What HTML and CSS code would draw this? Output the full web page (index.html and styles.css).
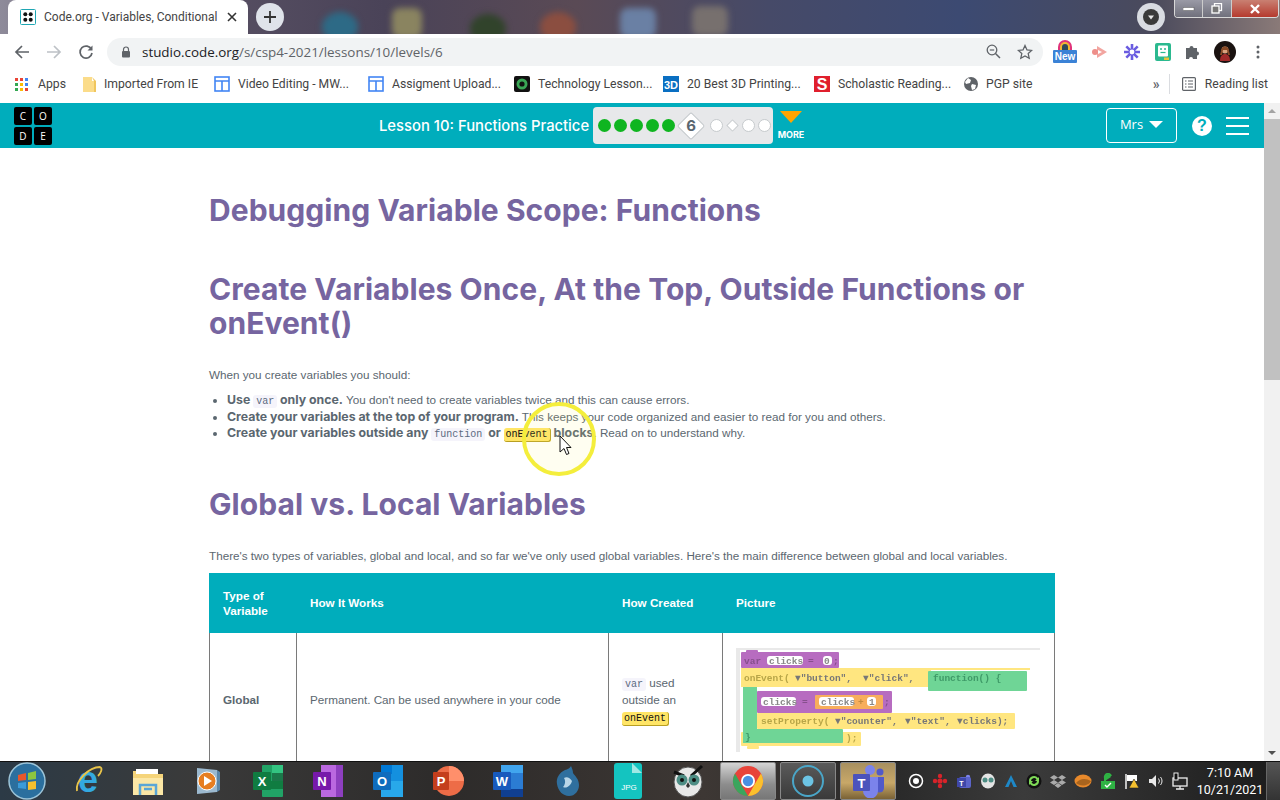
FILE: index.html
```html
<!DOCTYPE html>
<html lang="en">
<head>
<meta charset="utf-8">
<title>Code.org - Variables, Conditionals</title>
<link rel="stylesheet" href="styles.css">
</head>
<body>
<div class="window">
  <div class="titlebar">
    <div class="wall-blobs"><i class="blob b1"></i><i class="blob b2"></i><i class="blob b3"></i><i class="blob b4"></i><i class="blob b5"></i><i class="blob b6"></i></div>
    <div class="tab">
      <svg class="fav" width="16" height="16" viewBox="0 0 16 16"><rect x=".5" y=".5" width="15" height="15" rx="1" fill="#fff" stroke="#1fa6b3"/><g fill="#111"><circle cx="5.3" cy="5.3" r="2"/><circle cx="10.7" cy="5.3" r="2"/><circle cx="5.3" cy="10.7" r="2"/><circle cx="10.7" cy="10.7" r="2"/></g></svg>
      <span class="tab-title">Code.org - Variables, Conditional</span>
      <svg class="tab-x" width="10" height="10" viewBox="0 0 10 10"><path d="M1 1l8 8M9 1l-8 8" stroke="#333" stroke-width="1.6"/></svg>
    </div>
    <div class="newtab"><svg width="12" height="12" viewBox="0 0 12 12"><path d="M6 0v12M0 6h12" stroke="#333" stroke-width="1.8"/></svg></div>
    <div class="spacer"></div>
    <div class="profile-dot"><svg width="18" height="18" viewBox="0 0 18 18"><circle cx="9" cy="9" r="8" fill="#3a3a3a"/><path d="M6 7.5h6L9 11.5z" fill="#e8e8e8"/></svg></div>
    <div class="winctl">
      <span class="wbtn"><svg width="12" height="6" viewBox="0 0 12 6"><rect y="1.500" width="11" height="3" fill="#fff" stroke="#555" stroke-width=".5"/></svg></span>
      <span class="wbtn"><svg width="12" height="11" viewBox="0 0 12 11"><rect x="3.500" y=".5" width="7" height="7" fill="none" stroke="#fff" stroke-width="1.300"/><rect x="1" y="3" width="7" height="7" fill="#777" stroke="#fff" stroke-width="1.300"/></svg></span>
      <span class="wbtn close"><svg width="12" height="10" viewBox="0 0 12 10"><path d="M2 1l8 8M10 1l-8 8" stroke="#fff" stroke-width="2.400"/></svg></span>
    </div>
  </div>

  <div class="toolbar">
    <svg class="nav" width="16" height="16" viewBox="0 0 16 16"><path d="M15 8H2M8 2L2 8l6 6" fill="none" stroke="#5f6368" stroke-width="1.700"/></svg>
    <svg class="nav" width="16" height="16" viewBox="0 0 16 16"><path d="M1 8h13M8 2l6 6-6 6" fill="none" stroke="#bdc1c6" stroke-width="1.700"/></svg>
    <svg class="nav" width="16" height="16" viewBox="0 0 16 16"><path d="M13.500 5.500A6 6 0 1 0 14 9" fill="none" stroke="#5f6368" stroke-width="1.700"/><path d="M14.500 1.500v5h-5z" fill="#5f6368"/></svg>
    <div class="omnibox">
      <svg class="lock" width="10" height="12" viewBox="0 0 10 12"><path d="M2.500 5V3.500a2.500 2.500 0 0 1 5 0V5" fill="none" stroke="#5f6368" stroke-width="1.200"/><rect x="1" y="5" width="8" height="6.500" rx="1" fill="#5f6368"/></svg>
      <span class="url"><b>studio.code.org</b>/s/csp4-2021/lessons/10/levels/6</span>
      <span class="spacer"></span>
      <svg width="15" height="15" viewBox="0 0 15 15"><circle cx="6" cy="6" r="4.800" fill="none" stroke="#5f6368" stroke-width="1.300"/><path d="M9.500 9.500L14 14" stroke="#5f6368" stroke-width="1.500"/><path d="M3.800 6h4.400" stroke="#5f6368" stroke-width="1.200"/></svg>
      <svg class="star" width="16" height="16" viewBox="0 0 16 16"><path d="M8 1.500l2 4.400 4.700.5-3.500 3.200 1 4.700L8 11.900l-4.200 2.400 1-4.700L1.300 6.400l4.700-.5z" fill="none" stroke="#5f6368" stroke-width="1.300"/></svg>
    </div>
    <div class="exts">
      <span class="ext-new"><svg width="22" height="14" viewBox="0 0 22 14"><path d="M4 14V9a7 7 0 0 1 14 0v5z" fill="#e0337a"/><path d="M6 14V9a5 5 0 0 1 10 0v5z" fill="#f2b632"/><path d="M8 14V9a3 3 0 0 1 6 0v5z" fill="#2e4a5a"/></svg><em class="new-tag">New</em></span>
      <svg width="18" height="16" viewBox="0 0 18 16"><path d="M6 2l10 6-10 6z" fill="#f2a5a0"/><circle cx="4" cy="8" r="3" fill="#ee8f8a"/><path d="M7 6l4 2-4 2z" fill="#fff"/></svg>
      <svg width="18" height="18" viewBox="0 0 18 18"><g stroke="#6a5ce0" stroke-width="2.600"><path d="M9 1v16M1 9h16M3.300 3.300l11.400 11.400M14.700 3.300L3.300 14.700"/></g><circle cx="9" cy="9" r="2.400" fill="#fff"/></svg>
      <svg width="16" height="18" viewBox="0 0 16 18"><rect width="16" height="18" rx="2" fill="#2bb98f"/><rect x="3" y="2.500" width="10" height="11" rx="1" fill="#fff"/><circle cx="6" cy="6" r="1" fill="#2bb98f"/><circle cx="10" cy="6" r="1" fill="#2bb98f"/><path d="M5.500 9.500h5" stroke="#2bb98f" stroke-width="1.200"/><rect x="9" y="14.500" width="5" height="2.500" fill="#e8c33a"/></svg>
      <svg width="15" height="15" viewBox="0 0 15 15"><path d="M1 4h3.500a2 2 0 1 1 4 0H12v3.500a2 2 0 1 1 0 4V15H8a2 2 0 1 0-4 0H1z" fill="#5f6368"/></svg>
      <svg width="22" height="22" viewBox="0 0 22 22"><circle cx="11" cy="11" r="11" fill="#1a1210"/><path d="M6 20c0-5 2-7 5-7s5 2 5 7z" fill="#a02a2a"/><circle cx="11" cy="9" r="3.400" fill="#d9a27e"/><path d="M7 10c0-6 8-6 8 0l1 4h-2l-1-5H9l-1 5H6z" fill="#8a4a26"/></svg>
      <svg class="dots" width="4" height="14" viewBox="0 0 4 14"><g fill="#5f6368"><circle cx="2" cy="2" r="1.500"/><circle cx="2" cy="7" r="1.500"/><circle cx="2" cy="12" r="1.500"/></g></svg>
    </div>
  </div>

  <div class="bookmarks">
    <span class="bm"><svg width="13" height="13" viewBox="0 0 13 13"><g><rect width="3" height="3" fill="#ea4335"/><rect x="5" width="3" height="3" fill="#ea4335"/><rect x="10" width="3" height="3" fill="#4285f4"/><rect y="5" width="3" height="3" fill="#34a853"/><rect x="5" y="5" width="3" height="3" fill="#fbbc05"/><rect x="10" y="5" width="3" height="3" fill="#4285f4"/><rect y="10" width="3" height="3" fill="#34a853"/><rect x="5" y="10" width="3" height="3" fill="#fbbc05"/><rect x="10" y="10" width="3" height="3" fill="#ea4335"/></g></svg>Apps</span>
    <span class="bm"><svg width="13" height="16" viewBox="0 0 13 16"><path d="M0 1h9v4h4v11H0z" fill="#fbdc8a"/><path d="M9 1l4 4v11h-2V5z" fill="#f0c65e"/></svg>Imported From IE</span>
    <span class="bm"><svg class="gsite" width="16" height="16" viewBox="0 0 16 16"><rect x="1" y="1" width="14" height="14" fill="none" stroke="#4285f4" stroke-width="1.600"/><path d="M1 5h14M8 5v10" stroke="#4285f4" stroke-width="1.600"/></svg>Video Editing - MW...</span>
    <span class="bm"><svg class="gsite" width="16" height="16" viewBox="0 0 16 16"><rect x="1" y="1" width="14" height="14" fill="none" stroke="#4285f4" stroke-width="1.600"/><path d="M1 5h14M8 5v10" stroke="#4285f4" stroke-width="1.600"/></svg>Assigment Upload...</span>
    <span class="bm"><svg class="gsite" width="16" height="16" viewBox="0 0 16 16"><rect width="16" height="16" rx="2" fill="#111"/><circle cx="8" cy="8" r="5.500" fill="#3aa655"/><circle cx="8" cy="8" r="2.600" fill="#111"/></svg>Technology Lesson...</span>
    <span class="bm"><svg class="gsite" width="16" height="16" viewBox="0 0 16 16"><rect width="16" height="16" fill="#0a6fc2"/><text x="8" y="12.500" class="svg-3d">3D</text></svg>20 Best 3D Printing...</span>
    <span class="bm"><svg class="gsite" width="16" height="16" viewBox="0 0 16 16"><rect width="16" height="16" fill="#e01f2d"/><text x="8" y="13.500" class="svg-s">S</text></svg>Scholastic Reading...</span>
    <span class="bm"><svg class="gsite" width="16" height="16" viewBox="0 0 16 16"><circle cx="8" cy="8" r="7" fill="#5f6368"/><path d="M5 2l3 2-1 3-4 1-1-2zM9 8l4 1-1 4-3 1-1-4z" fill="#fff"/></svg>PGP site</span>
    <span class="spacer"></span>
    <span class="chev">»</span>
    <span class="bm-sep"></span>
    <span class="bm reading"><svg width="14" height="14" viewBox="0 0 14 14"><rect x=".6" y=".6" width="12.800" height="12.800" rx="1" fill="none" stroke="#5f6368" stroke-width="1.200"/><path d="M3 4h1.500M3 7h1.500M3 10h1.500M6 4h5M6 7h5M6 10h5" stroke="#5f6368" stroke-width="1.200"/></svg>Reading list</span>
  </div>

  <div class="page">
    <div class="viewport">
      <header class="site-head">
        <div class="logo"><span>C</span><span>O</span><span>D</span><span>E</span></div>
        <div class="lesson">
          <span class="lesson-name">Lesson 10: Functions Practice</span>
          <div class="progress">
            <i class="dot done"></i><i class="dot done"></i><i class="dot done"></i><i class="dot done"></i><i class="dot done"></i>
            <span class="current"><span class="diamond"></span><span class="num">6</span></span>
            <i class="dot"></i><i class="mini"></i><i class="dot"></i><i class="dot"></i>
          </div>
          <div class="more"><i class="more-arrow"></i><span>MORE</span></div>
        </div>
        <div class="user-btn">Mrs <i class="caret"></i></div>
        <div class="help">?</div>
        <div class="burger"><i></i><i></i><i></i></div>
      </header>
      <main class="content">
        <h1 class="t1">Debugging Variable Scope: Functions</h1>
        <h1 class="t2">Create Variables Once, At the Top, Outside Functions or onEvent()</h1>
        <p class="intro">When you create variables you should:</p>
        <ul class="rules">
          <li><strong>Use <code>var</code> only once.</strong> You don't need to create variables twice and this can cause errors.</li>
          <li><strong>Create your variables at the top of your program.</strong> This keeps your code organized and easier to read for you and others.</li>
          <li><strong>Create your variables outside any <code>function</code> or <code class="ev">onEvent</code> blocks</strong>. Read on to understand why.</li>
        </ul>
        <h1 class="t3">Global vs. Local Variables</h1>
        <p class="intro2">There's two types of variables, global and local, and so far we've only used global variables. Here's the main difference between global and local variables.</p>
        <table class="vars">
          <colgroup><col class="c1"><col class="c2"><col class="c3"><col class="c4"></colgroup>
          <thead><tr><th>Type of Variable</th><th>How It Works</th><th>How Created</th><th>Picture</th></tr></thead>
          <tbody><tr>
            <td><strong>Global</strong></td>
            <td>Permanent. Can be used anywhere in your code</td>
            <td><code>var</code> used outside an <code class="ev">onEvent</code></td>
            <td class="pic">
              <svg class="blocks" width="304" height="104" viewBox="0 0 304 104">
                <rect width="304" height="104" fill="#fff"/>
                <path d="M0 0h304v2H4v102H0z" fill="#e9e9e9"/>
                <rect x="5" y="20" width="190" height="19" fill="#ffe680"/>
                <path d="M5 20h289v2H5z" fill="#ffe680"/>
                <rect x="5" y="84" width="120" height="14" rx="1" fill="#ffe680"/>
                <rect x="11" y="98" width="12" height="3" rx="1" fill="#ffe680"/>
                <rect x="7" y="39" width="14" height="56" fill="#6fd596"/>
                <rect x="7" y="81" width="100" height="14" rx="1" fill="#6fd596"/>
                <rect x="192" y="23" width="99" height="20" rx="1" fill="#6fd596"/>
                <rect x="5" y="4" width="98" height="16" rx="1" fill="#b76cc0"/>
                <rect x="10" y="2" width="12" height="3" rx="1" fill="#b76cc0"/>
                <rect x="21" y="43" width="135" height="22" rx="1" fill="#b76cc0"/>
                <rect x="79" y="47" width="68" height="14" rx="1" fill="#f7ae5c"/>
                <rect x="21" y="65" width="258" height="16" rx="1" fill="#ffe680"/>
                <rect x="31" y="8" width="36" height="9" rx="3" fill="#fff"/><rect x="87" y="8" width="9" height="9" rx="3" fill="#fff"/>
                <rect x="25" y="49" width="35" height="9" rx="3" fill="#fff"/><rect x="83" y="49" width="35" height="9" rx="3" fill="#fff"/><rect x="131" y="49" width="9" height="9" rx="3" fill="#fff"/>
                <g class="btxt">
                  <text x="8" y="16" fill="#864f8d">var</text><text x="33" y="16" fill="#888">clicks</text><text x="72" y="16" fill="#864f8d">=</text><text x="88" y="16" fill="#888">0</text><text x="97" y="16" fill="#864f8d">;</text>
                  <text x="8" y="33" fill="#b8a648">onEvent(</text><text x="59" y="33" fill="#777">▼"button",</text><text x="127" y="33" fill="#777">▼"click",</text><text x="197" y="33" fill="#3f9a68">function() {</text>
                  <text x="27" y="57" fill="#888">clicks</text><text x="66" y="57" fill="#864f8d">=</text><text x="85" y="57" fill="#888">clicks</text><text x="122" y="57" fill="#c28a40">+</text><text x="133" y="57" fill="#888">1</text><text x="148" y="57" fill="#864f8d">;</text>
                  <text x="25" y="76" fill="#b8a648">setProperty(</text><text x="99" y="76" fill="#777">▼"counter",</text><text x="169" y="76" fill="#777">▼"text",</text><text x="221" y="76" fill="#777">▼clicks);</text>
                  <text x="9" y="92" fill="#3f9a68">}</text><text x="110" y="93" fill="#b8a648">);</text>
                </g>
              </svg>
            </td>
          </tr></tbody>
        </table>
        <div class="cursor-ring"></div>
        <svg class="pointer" width="13" height="21" viewBox="0 0 13 21"><path d="M1 1v16l4-3.500 2.500 6 2.500-1-2.500-6H12z" fill="#fff" stroke="#111" stroke-width="1"/></svg>
      </main>
    </div>
    <div class="scrollbar"><i class="arr up"></i><i class="thumb"></i><i class="spacer"></i><i class="arr down"></i></div>
  </div>

  <div class="taskbar">
    <span class="orb"><svg width="38" height="38" viewBox="0 0 38 38"><circle cx="19" cy="19" r="18" fill="#2b6f9e" stroke="#9cc4d8" stroke-width="1.500"/><path d="M10 13l8-2v7l-8 1z" fill="#e8572a"/><path d="M20 11l8-2v8l-8 1z" fill="#8dc63f"/><path d="M10 21l8-1v7l-8-1z" fill="#3a9bd9"/><path d="M20 20l8-1v8l-8 1z" fill="#f5c02e"/></svg></span>
    <span class="tb"><svg class="ie" width="30" height="32" viewBox="0 0 30 32"><text x="15" y="27" class="svg-ie">e</text><path d="M4 26C2 16 16 2 27 2c3 1 1 6-2 9" fill="none" stroke="#e8c34a" stroke-width="1.800"/></svg></span>
    <span class="tb"><svg width="32" height="32" viewBox="0 0 32 32"><path d="M1 6h12l2 3h16v21H1z" fill="#f5d47a"/><rect x="4" y="4" width="22" height="5" fill="#fff"/><path d="M1 13h30v17H1z" fill="#fbe7a6"/><path d="M8 30V20h16v10M12 24h8" fill="none" stroke="#5aa6d6" stroke-width="2.500"/></svg></span>
    <span class="tb"><svg width="28" height="30" viewBox="0 0 28 30"><path d="M3 2l20 2v22L3 28z" fill="#9cb9cf"/><path d="M23 4l3 2v18l-3 2z" fill="#5b86a8"/><circle cx="13" cy="15" r="9" fill="#e67e22" stroke="#fff" stroke-width="1"/><path d="M10 10l8 5-8 5z" fill="#fff"/></svg></span>
    <span class="tb"><svg width="32" height="34" viewBox="0 0 32 34"><rect x="10" y="1" width="21" height="32" rx="1" fill="#21a366"/><rect x="20" y="1" width="11" height="8" fill="#33c481"/><rect x="10" y="17" width="21" height="8" fill="#107c41"/><rect x="20" y="9" width="11" height="8" fill="#185c37" opacity=".6"/><rect x="1" y="8" width="18" height="18" rx="1" fill="#107c41"/><text x="10" y="22" class="svg-ol">X</text></svg></span>
    <span class="tb"><svg width="32" height="34" viewBox="0 0 32 34"><rect x="9" y="1" width="22" height="32" fill="#ba68e0"/><rect x="24" y="1" width="7" height="32" fill="#8e3fc0"/><rect x="1" y="8" width="18" height="18" rx="1" fill="#7719aa"/><text x="10" y="22" class="svg-ol">N</text></svg></span>
    <span class="tb"><svg width="32" height="34" viewBox="0 0 32 34"><rect x="9" y="1" width="22" height="32" fill="#1490df"/><rect x="9" y="1" width="11" height="9" fill="#0078d4"/><path d="M9 17h22v16H9z" fill="#28a8ea"/><rect x="1" y="8" width="18" height="18" rx="1" fill="#0f6cbd"/><text x="10" y="22" class="svg-ol">O</text></svg></span>
    <span class="tb"><svg width="32" height="34" viewBox="0 0 32 34"><circle cx="17" cy="17" r="15" fill="#ed6c47"/><path d="M17 2a15 15 0 0 1 15 15H17z" fill="#ff8f6b"/><rect x="1" y="8" width="16" height="18" rx="1" fill="#c43e1c"/><text x="9" y="22" class="svg-ol">P</text></svg></span>
    <span class="tb"><svg width="32" height="34" viewBox="0 0 32 34"><rect x="9" y="1" width="22" height="32" fill="#2b7cd3"/><rect x="9" y="1" width="22" height="8" fill="#41a5ee"/><rect x="9" y="25" width="22" height="8" fill="#103f91"/><rect x="1" y="8" width="18" height="18" rx="1" fill="#185abd"/><text x="10" y="22" class="svg-ol">W</text></svg></span>
    <span class="tb"><svg width="26" height="32" viewBox="0 0 26 32"><path d="M16 1c-2 3-3 3-6 4C4 8 1 13 2 19c1 7 6 12 12 12 6 0 10-5 10-11 0-6-4-9-6-12 0-2-1-5-2-7z" fill="#2f6f9e"/><path d="M9 13c3-2 6 0 8 3-1 4-5 8-9 6 2-2 3-6 1-9z" fill="#b9d6e8"/></svg></span>
    <span class="tb"><svg width="28" height="36" viewBox="0 0 28 36"><rect width="28" height="36" rx="3" fill="#14c4c0"/><path d="M18 0l10 10H18z" fill="#9fe8e4"/><text x="15" y="27" class="svg-jpg">JPG</text></svg></span>
    <span class="tb"><svg width="32" height="34" viewBox="0 0 32 34"><ellipse cx="16" cy="18" rx="14" ry="15" fill="#e8e8e8" stroke="#555"/><path d="M2 8l10 4M30 2L19 12" stroke="#111" stroke-width="3"/><circle cx="10" cy="16" r="5.500" fill="#4d8d84"/><circle cx="22" cy="16" r="5.500" fill="#4d8d84"/><circle cx="10" cy="16" r="2" fill="#111"/><circle cx="22" cy="16" r="2" fill="#111"/><path d="M16 18l-2 4 2 2 2-2z" fill="#333"/></svg></span>
    <span class="tb active"><svg width="32" height="32" viewBox="0 0 32 32"><circle cx="16" cy="16" r="15" fill="#e8443a"/><path d="M29 8.500A15 15 0 0 1 16 31l6.500-11.500z" fill="#fbc02d"/><path d="M16 31A15 15 0 0 1 3 8.500l6.500 11.500z" fill="#3ba55d"/><circle cx="16" cy="16" r="7" fill="#fff"/><circle cx="16" cy="16" r="5.200" fill="#4a90e2"/></svg></span>
    <span class="tb active dark"><svg width="34" height="34" viewBox="0 0 34 34"><circle cx="17" cy="17" r="15" fill="none" stroke="#4aa6c8" stroke-width="2"/><circle cx="17" cy="17" r="5.500" fill="#6cc4e4"/></svg></span>
    <span class="tb active gold"><svg width="34" height="34" viewBox="0 0 34 34"><circle cx="19" cy="6" r="5" fill="#7b83eb"/><circle cx="29" cy="8" r="3.500" fill="#5059c9"/><path d="M24 13h9v11a4.500 4.500 0 0 1-9 0z" fill="#5059c9"/><path d="M12 13h15v14a7 7 0 0 1-15 0z" fill="#7b83eb"/><rect x="2" y="10" width="17" height="17" rx="1" fill="#4b53bc"/><text x="10.500" y="24" class="svg-ol">T</text></svg></span>
    <div class="tray">
      <svg width="16" height="16" viewBox="0 0 16 16"><circle cx="8" cy="8" r="6.500" fill="none" stroke="#fff" stroke-width="1.500"/><circle cx="8" cy="8" r="3" fill="#fff"/></svg>
      <svg width="16" height="16" viewBox="0 0 16 16"><g fill="#d8232a"><circle cx="8" cy="3" r="2.200"/><circle cx="3" cy="8" r="2.200"/><circle cx="13" cy="8" r="2.200"/><circle cx="8" cy="13" r="2.200"/><circle cx="8" cy="8" r="2.600"/></g></svg>
      <svg width="16" height="16" viewBox="0 0 16 16"><circle cx="12" cy="4" r="2.200" fill="#7b83eb"/><rect x="3" y="4" width="12" height="11" rx="2" fill="#5b64c9"/><rect x="1" y="5" width="9" height="9" fill="#3f47a8"/><text x="5.500" y="12.500" class="svg-tiny">T</text></svg>
      <svg width="16" height="16" viewBox="0 0 16 16"><ellipse cx="8" cy="8" rx="7" ry="7.500" fill="#e4e4e4"/><circle cx="5" cy="7" r="2.500" fill="#4d8d84"/><circle cx="11" cy="7" r="2.500" fill="#4d8d84"/></svg>
      <svg width="14" height="14" viewBox="0 0 14 14"><path d="M7 1L1 13h3.500L7 7l2.500 6H13z" fill="#1e88c7"/></svg>
      <svg width="16" height="16" viewBox="0 0 16 16"><circle cx="8" cy="8" r="7.500" fill="#111"/><path d="M3 8a5 5 0 0 1 9-3l1-1v4H9l1.500-1.500A3 3 0 0 0 5 8zM13 8a5 5 0 0 1-9 3l-1 1V8h4l-1.500 1.500A3 3 0 0 0 11 8z" fill="#7ed957"/></svg>
      <svg width="16" height="14" viewBox="0 0 16 14"><path d="M4 1l4 2.500L4 6 0 3.500zM12 1l4 2.500L12 6 8 3.500zM4 6l4 2.500L4 11 0 8.500zM12 6l4 2.500-4 2.500-4-2.500zM8 9l3.500 2.500L8 14l-3.500-2.500z" fill="#aaa"/></svg>
      <svg width="18" height="14" viewBox="0 0 18 14"><ellipse cx="9" cy="7" rx="8.500" ry="6.500" fill="#e8892b"/><path d="M2 9c4-5 10-5 15-2-2 5-11 6-15 2z" fill="#a8641e"/></svg>
      <svg width="16" height="16" viewBox="0 0 16 16"><path d="M1 8h14v8H1zM5 8V5a3 3 0 0 1 6-1" fill="#2fb344"/><path d="M5 8V5a3 3 0 0 1 6-2" fill="none" stroke="#2fb344" stroke-width="2"/><path d="M5 12l2 2 4-4" fill="none" stroke="#fff" stroke-width="1.400"/></svg>
      <svg width="16" height="16" viewBox="0 0 16 16"><path d="M2 1v15" stroke="#fff" stroke-width="1.400"/><path d="M3 2h10v6H3z" fill="#fff"/><path d="M10 6l5 9H5z" fill="#f5c02e" stroke="#222" stroke-width=".6"/></svg>
      <svg width="16" height="14" viewBox="0 0 16 14"><path d="M1 5h3l4-4v12L4 9H1z" fill="#e8e8e8"/><path d="M10.500 4.500a4 4 0 0 1 0 5M12.500 3a6 6 0 0 1 0 8" fill="none" stroke="#e8e8e8" stroke-width="1"/></svg>
      <svg width="16" height="18" viewBox="0 0 16 18"><rect x="1" y="6" width="14" height="8" fill="none" stroke="#eee" stroke-width="1.300"/><rect x="2" y="1" width="4" height="7" fill="#111" stroke="#eee"/><path d="M8 14v3M4 17h8" stroke="#eee" stroke-width="1.300"/></svg>
    </div>
    <div class="clock"><span>7:10 AM</span><span>10/21/2021</span></div>
    <span class="show-desktop"></span>
  </div>
</div>
</body>
</html>
```
FILE: styles.css
```css
* { box-sizing: border-box; }
html, body { margin: 0; height: 100%; overflow: hidden; }
body { font-family: "Liberation Sans", Arial, sans-serif; background: #fff; }
.window { width: 1280px; height: 800px; display: flex; flex-direction: column; overflow: hidden; }
.spacer { flex: 1; }

/* title bar */
.titlebar { height: 34px; flex: none; position: relative; display: flex; align-items: flex-start; overflow: hidden;
  background: linear-gradient(90deg, #8e8b9a 0, #5b5366 12%, #4a4358 30%, #5a4a55 45%, #464a68 60%, #3c4a72 75%, #4a4a5c 90%, #8a7a78 100%); padding-left: 8px; }
.wall-blobs { position: absolute; inset: 0; filter: blur(3px); }
.blob { position: absolute; top: 12px; width: 36px; height: 30px; border-radius: 8px; }
.b1 { left: 322px; background: #2d6a86; border-radius: 50%; }
.b2 { left: 392px; width: 30px; top: 8px; background: #8a8460; }
.b3 { left: 470px; background: #31432b; border-radius: 50%; top: 14px; }
.b4 { left: 540px; background: #8b4e40; border-radius: 50%; }
.b5 { left: 620px; background: #6a80a4; top: 8px; }
.b6 { left: 692px; background: #77706e; top: 6px; }
.tab { position: relative; width: 240px; height: 34px; background: #fff; border-radius: 8px 8px 0 0; display: flex; align-items: center; padding-left: 12px; }
.fav { flex: none; }
.tab-title { font: 12px Roboto, sans-serif; color: #444; margin-left: 8px; width: 174px; white-space: nowrap; }
.tab-x { margin-left: 9px; flex: none; }
.newtab { position: relative; width: 28px; height: 28px; border-radius: 50%; background: #dfe3ea; margin: 3px 0 0 8px; display: flex; align-items: center; justify-content: center; }
.profile-dot { position: relative; width: 28px; height: 28px; border-radius: 50%; background: #d9dce2; margin-top: 3px; display: flex; align-items: center; justify-content: center; margin-right: 9px; }
.winctl { position: relative; display: flex; height: 18px; width: 105px; margin-right: 1px; border: 1px solid #d8d8d8; border-top: none; border-radius: 0 0 4px 4px; overflow: hidden; }
.wbtn { flex: 1; display: flex; align-items: center; justify-content: center; background: linear-gradient(#9a9aa6, #70707c); border-right: 1px solid #ccc; }
.wbtn.close { flex: 1.700; background: linear-gradient(#c98072, #b53a2e); border: none; }

/* toolbar */
.toolbar { height: 35px; flex: none; background: #fff; display: flex; align-items: center; padding-left: 14px; }
.nav { margin-right: 16px; flex: none; }
.nav:nth-child(3) { margin-right: 13px; }
.omnibox { width: 936px; height: 28px; border-radius: 14px; background: #f1f3f4; display: flex; align-items: center; padding: 0 10px 0 14px; gap: 0; }
.lock { margin-right: 11px; }
.url { font: 13.400px "Open Sans", sans-serif; color: #5f6368; }
.url b { font-weight: 400; color: #202124; }
.star { margin-left: 16px; }
.exts { display: flex; align-items: center; margin-left: 10px; gap: 14px; }
.dots { margin-left: 6px; }
.ext-new { position: relative; width: 24px; height: 24px; display: block; }
.ext-new svg { position: absolute; top: -2px; left: 1px; }
.new-tag { position: absolute; left: 0; top: 10px; width: 24px; height: 13px; background: #3b82d6; color: #fff; font: bold 10px/13px "Liberation Sans", sans-serif; text-align: center; border-radius: 1px; }

/* bookmarks */
.bookmarks { height: 34px; flex: none; background: #fff; display: flex; align-items: center; padding: 0 0 4px 15px; font: 12.200px Roboto, sans-serif; color: #444; }
.bm { display: flex; align-items: center; gap: 10px; white-space: nowrap; flex: none; }
.bm:nth-child(1) { width: 68px; }
.bm:nth-child(2) { width: 131px; gap: 8px; }
.bm:nth-child(3) { width: 154px; gap: 8px; }
.bm:nth-child(4) { width: 146px; gap: 8px; }
.bm:nth-child(5) { width: 149px; gap: 8px; }
.bm:nth-child(6) { width: 151px; gap: 8px; }
.bm:nth-child(7) { width: 149px; gap: 8px; }
.bm:nth-child(8) { gap: 7px; }
.chev { color: #5f6368; font-size: 14px; font-weight: 600; margin-right: 9px; }
.bm-sep { width: 1px; height: 20px; background: #dadce0; margin-right: 12px; }
.reading { margin-right: 12px; gap: 9px; }

/* page */
.page { flex: 1; min-height: 0; display: flex; }
.viewport { width: 1264px; display: flex; flex-direction: column; }
.scrollbar { width: 16px; background: #f1f1f1; display: flex; flex-direction: column; align-items: center; }
.arr { height: 16px; width: 16px; flex: none; position: relative; }
.arr::after { content: ""; position: absolute; left: 4px; border: 4px solid transparent; }
.up::after { top: 2px; border-bottom: 4px solid #a3a3a3; }
.down::after { top: 6px; border-top: 4px solid #505050; }
.thumb { width: 16px; height: 261px; background: #c1c1c1; flex: none; }

.site-head { height: 45px; flex: none; background: #00adbc; position: relative; display: flex; align-items: center; padding-left: 14px; }
.logo { width: 38px; height: 38px; display: grid; grid-template-columns: 18px 18px; grid-auto-rows: 18px; gap: 2px; }
.logo span { background: #000; color: #fff; border-radius: 2px; font: 10px/18px "Open Sans", sans-serif; text-align: center; }
.lesson { display: flex; align-items: center; margin-left: 327px; }
.lesson-name { font: 500 14.800px "Inter", sans-serif; color: #fff; width: 214px; white-space: nowrap; }
.progress { width: 180px; height: 37px; background: #e7e8ea; border-radius: 4px; display: flex; align-items: center; padding-left: 5px; gap: 3px; }
.dot { width: 13px; height: 13px; border-radius: 50%; background: #0fb520; flex: none; }
.progress > .dot:not(.done) { background: #fff; border: 1px solid #c6cacd; }
.current { position: relative; width: 28px; height: 28px; display: flex; align-items: center; justify-content: center; flex: none; margin: 0 2px 0 -1px; }
.diamond { position: absolute; left: 4px; top: 4px; width: 20px; height: 20px; background: #fff; border: 1px solid #c6cacd; transform: rotate(45deg); border-radius: 2px; }
.num { position: relative; font: bold 15px "Inter", sans-serif; color: #5b6770; }
.mini { width: 9px; height: 9px; margin: 0 2px; background: #fff; border: 1px solid #c6cacd; transform: rotate(45deg); flex: none; }
.more { width: 32px; margin-left: 2px; display: flex; flex-direction: column; align-items: center; }
.more-arrow { width: 0; height: 0; border: 11px solid transparent; border-top: 12px solid #ffa400; border-bottom: none; margin-bottom: 6px; }
.more span { font: 700 9px "Inter", sans-serif; color: #fff; }
.user-btn { position: absolute; left: 1106px; top: 5px; width: 71px; height: 35px; border: 1px solid #fff; border-radius: 4px; color: #fff; font: 13px "Open Sans", sans-serif; display: flex; align-items: center; justify-content: center; gap: 6px; padding-bottom: 3px; }
.caret { width: 0; height: 0; border: 7px solid transparent; border-top: 7px solid #fff; border-bottom: none; }
.help { position: absolute; left: 1192px; top: 13px; width: 20px; height: 20px; background: #fff; border-radius: 50%; color: #00adbc; font: bold 16px/20px "Liberation Sans", sans-serif; text-align: center; }
.burger { position: absolute; left: 1226px; top: 14px; width: 23px; display: flex; flex-direction: column; gap: 6px; }
.burger i { height: 2px; background: #fff; display: block; }

.content { flex: 1; min-height: 0; position: relative; overflow: hidden; padding-left: 209px; color: #5b6770; font-size: 11.700px; }
h1 { font: 700 30px/34px "Inter", sans-serif; color: #7665a0; margin: 0; width: 846px; letter-spacing: .05px; }
.t1 { margin-top: 45px; }
.t2 { margin-top: 45px; }
.t3 { margin-top: 45px; }
.intro { margin: 26px 0 0; line-height: 18px; }
.intro2 { margin: 26px 0 0; line-height: 18px; }
.rules { margin: 8px 0 0; padding-left: 18px; line-height: 16.500px; color: #5b6770; width: 846px; }
.rules strong { font: 700 12.300px "Inter", sans-serif; }
code { font: 10px "Liberation Mono", monospace; background: #f5f4fb; color: #5b6a80; padding: 1px 3px; border-radius: 3px; }
code.ev { background: #ffe566; color: #111; border-right: 1px solid #b89f22; border-bottom: 1px solid #b89f22; padding: 1px 2px; }

.vars { margin-top: 8px; width: 846px; border-collapse: separate; border-spacing: 0; table-layout: fixed; font-size: 11.700px; }
.c1 { width: 87px; } .c2 { width: 312px; } .c3 { width: 114px; } .c4 { width: 333px; }
.vars th { background: #00adbc; color: #fff; font-weight: 700; text-align: left; height: 60px; padding: 0 14px; line-height: 15px; }
.vars td { border-left: 1px solid #7a7a7a; padding: 14px 13px; line-height: 17px; height: 133px; vertical-align: middle; }
.vars td:last-child { border-right: 1px solid #7a7a7a; }
.vars td.pic { padding: 15px 13px 0 13px; vertical-align: top; }
.blocks { display: block; filter: blur(.35px); }
.btxt text { font: bold 9.500px "Liberation Mono", monospace; }

.cursor-ring { position: absolute; left: 522px; top: 254px; width: 74px; height: 74px; border-radius: 50%; border: 4px solid #f4ee3c; background: rgba(255, 250, 120, .1); }
.pointer { position: absolute; left: 559px; top: 287px; }

/* svg text */
.svg-3d { font: bold 11px "Liberation Sans", sans-serif; fill: #fff; text-anchor: middle; }
.svg-s { font: bold 16px "Liberation Sans", sans-serif; fill: #fff; text-anchor: middle; }
.svg-ie { font: bold 36px "Liberation Sans", sans-serif; fill: #33a9e0; text-anchor: middle; }
.svg-ol { font: bold 13px "Liberation Sans", sans-serif; fill: #fff; text-anchor: middle; }
.svg-jpg { font: 8px "Liberation Sans", sans-serif; fill: #fff; text-anchor: middle; }
.svg-tiny { font: bold 7px "Liberation Sans", sans-serif; fill: #fff; text-anchor: middle; }
.ie { overflow: visible; }

/* taskbar */
.taskbar { height: 39px; flex: none; border-top: 1px solid #111; display: flex; align-items: center;
  background: linear-gradient(90deg, #2c3a46 0, #3a3a3a 15%, #2d2b2a 35%, #3d3734 55%, #2a2a2a 70%, #3b3b3b 80%, #1c1c1c 100%); }
.orb { width: 58px; display: flex; flex: none; padding-left: 8px; }
.tb { width: 60px; height: 38px; flex: none; display: flex; align-items: center; justify-content: center; }
.tb.active { width: 56px; margin: 0 2px; border: 1px solid #888; border-radius: 2px; background: linear-gradient(#d4d4d4, #8c8c8c 60%, #777); }
.tb.active.dark { background: linear-gradient(#5a5a5a, #3a3a3a); }
.tb.active.gold { background: linear-gradient(#a89060, #c8a868 55%, #7a6236); }
.tray { display: flex; align-items: center; gap: 8px; margin-left: 10px; flex: none; }
.clock { margin-left: 6px; width: 72px; text-align: center; display: flex; flex-direction: column; font: 12.500px/17px Roboto, sans-serif; color: #fff; flex: none; }
.show-desktop { margin-left: auto; width: 14px; height: 38px; border-left: 1px solid #666; background: linear-gradient(#555, #333); flex: none; }
```
